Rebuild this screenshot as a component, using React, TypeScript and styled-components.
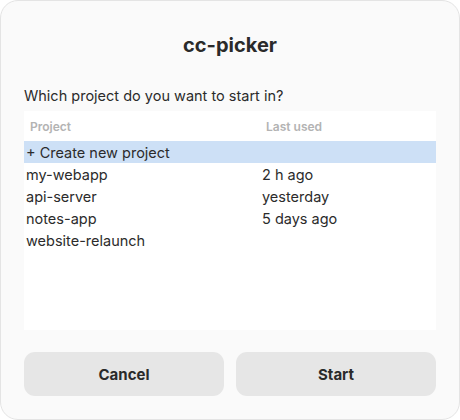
import React from 'react'
import styled, { createGlobalStyle } from 'styled-components'

const GlobalStyle = createGlobalStyle`
  html, body {
    margin: 0;
    padding: 0;
    background: #ffffff;
  }
  * {
    box-sizing: border-box;
  }
`

const Window = styled.div`
  width: 460px;
  height: 420px;
  background-color: #fafafa;
  border: 1px solid #e4e4e4;
  border-radius: 18px;
  padding: 0 23px 23px;
  display: flex;
  flex-direction: column;
  font-family: 'Inter', 'Noto Sans', sans-serif;
  color: #2b2b2b;
`

const Title = styled.h1`
  margin: 31px 0 0;
  font-size: 20px;
  font-weight: 700;
  line-height: 26px;
  text-align: center;
  color: #2a2a2a;
`

const Prompt = styled.div`
  margin-top: 28px;
  font-size: 14.5px;
  line-height: 20px;
  color: #2b2b2b;
`

const Table = styled.div`
  margin-top: 5px;
  height: 219px;
  background-color: #ffffff;
  display: flex;
  flex-direction: column;
`

const HeaderRow = styled.div`
  display: grid;
  grid-template-columns: 236px 1fr;
  height: 30px;
  align-items: center;
  padding-top: 1px;
`

const HeaderCell = styled.div`
  padding-left: 6px;
  font-size: 12px;
  font-weight: 600;
  color: #b3b3b3;
`

const Row = styled.div<{ $selected?: boolean }>`
  display: grid;
  grid-template-columns: 236px 1fr;
  height: 22px;
  align-items: center;
  background-color: ${(p) => (p.$selected ? '#cde0f6' : 'transparent')};
`

const Cell = styled.div`
  padding-left: 2px;
  font-size: 14.5px;
  color: #2b2b2b;
  white-space: nowrap;
`

const Footer = styled.div`
  margin-top: auto;
  display: grid;
  grid-template-columns: 1fr 1fr;
  gap: 12px;
`

const Button = styled.button`
  height: 44px;
  border: none;
  border-radius: 11px;
  background-color: #e6e6e6;
  font-family: 'Inter', 'Noto Sans', sans-serif;
  font-size: 15px;
  font-weight: 700;
  color: #2a2a2a;
  cursor: pointer;
`

const projects = [
  { name: 'my-webapp', lastUsed: '2 h ago' },
  { name: 'api-server', lastUsed: 'yesterday' },
  { name: 'notes-app', lastUsed: '5 days ago' },
  { name: 'website-relaunch', lastUsed: '' },
]

const App = () => {
  return (
    <>
      <GlobalStyle />
      <Window>
        <Title>cc-picker</Title>
        <Prompt>Which project do you want to start in?</Prompt>
        <Table>
          <HeaderRow>
            <HeaderCell>Project</HeaderCell>
            <HeaderCell>Last used</HeaderCell>
          </HeaderRow>
          <Row $selected>
            <Cell>+ Create new project</Cell>
            <Cell />
          </Row>
          {projects.map((p) => (
            <Row key={p.name}>
              <Cell>{p.name}</Cell>
              <Cell>{p.lastUsed}</Cell>
            </Row>
          ))}
        </Table>
        <Footer>
          <Button>Cancel</Button>
          <Button>Start</Button>
        </Footer>
      </Window>
    </>
  )
}

export default App
